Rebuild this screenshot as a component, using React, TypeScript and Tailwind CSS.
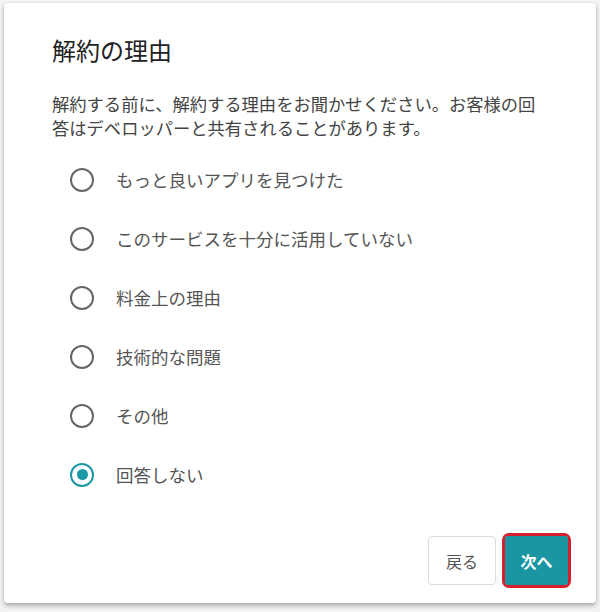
import React, { useState } from "react";

const options = [
  "もっと良いアプリを見つけた",
  "このサービスを十分に活用していない",
  "料金上の理由",
  "技術的な問題",
  "その他",
  "回答しない",
];

export default function App() {
  const [selected, setSelected] = useState(5);
  return (
    <div
      className="w-[600px] h-[612px] bg-[#f4f4f4] pt-[3px] pl-[4px]"
      style={{ fontFamily: '"Noto Sans CJK JP", "Noto Sans", sans-serif' }}
    >
      <div className="w-[592px] h-[600px] bg-white rounded-[4px] shadow-[0_3px_5px_rgba(0,0,0,0.28),0_0_2px_rgba(0,0,0,0.15)] flex flex-col pl-[48px] pr-[25px]">
        <h1 className="mt-[31px] text-[24px] leading-[32px] text-[#222] font-normal">解約の理由</h1>
        <p className="mt-[26px] w-[492px] text-[17.3px] leading-[24px] text-[#444]">
          解約する前に、解約する理由をお聞かせください。お客様の回答はデベロッパーと共有されることがあります。
        </p>
        <div className="mt-[10px] flex flex-col pl-[18px]">
          {options.map((o, i) => (
            <label
              key={o}
              className="h-[59px] flex items-center gap-[22px] cursor-pointer"
              onClick={() => setSelected(i)}
            >
              {selected === i ? (
                <span className="w-[24px] h-[24px] rounded-full border-[2.5px] border-[#1a98a4] flex items-center justify-center">
                  <span className="w-[11px] h-[11px] rounded-full bg-[#1a98a4]" />
                </span>
              ) : (
                <span className="w-[24px] h-[24px] rounded-full border-[2.5px] border-[#666]" />
              )}
              <span className="text-[17.5px] leading-[24px] text-[#555]">{o}</span>
            </label>
          ))}
        </div>
        <div className="mt-[29px] flex justify-end items-center gap-[6px]">
          <button className="w-[68px] h-[49px] rounded-[4px] border border-[#dcdcdc] bg-white text-[16px] text-[#555]">
            戻る
          </button>
          <div className="rounded-[7px] border-[3px] border-[#d71f2d]">
            <button className="w-[63px] h-[49px] rounded-[3px] bg-[#1a96a2] text-[16px] font-bold text-white">
              次へ
            </button>
          </div>
        </div>
      </div>
    </div>
  );
}
